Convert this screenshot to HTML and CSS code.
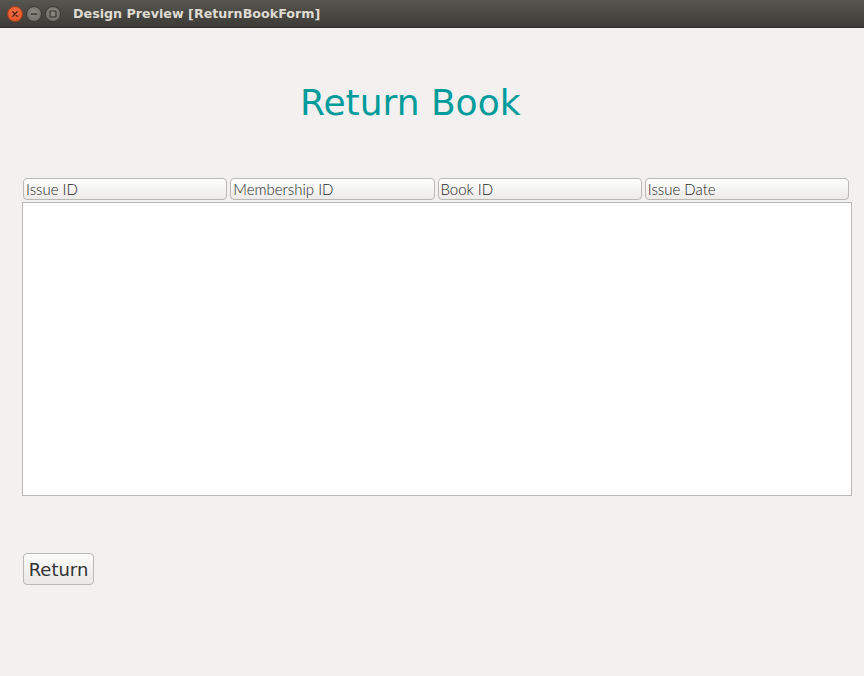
FILE: index.html
```html
<!DOCTYPE html>
<html>
<head>
<meta charset="utf-8">
<title>Design Preview [ReturnBookForm]</title>
<link rel="stylesheet" href="styles.css">
</head>
<body>
<div class="window">
  <div class="titlebar">
    <div class="controls">
      <span class="ctl close"><svg width="8" height="8" viewBox="0 0 8 8"><path d="M1.8 1.8 L6.2 6.2 M6.2 1.8 L1.8 6.2" stroke="#4a1e0e" stroke-width="1.3" stroke-linecap="round"/></svg></span>
      <span class="ctl min"><svg width="8" height="8" viewBox="0 0 8 8"><path d="M1 4 H7" stroke="#35342f" stroke-width="1.4"/></svg></span>
      <span class="ctl max"><svg width="8" height="8" viewBox="0 0 8 8"><rect x="1" y="1" width="6" height="6" rx="1" fill="none" stroke="#35342f" stroke-width="1.2"/></svg></span>
    </div>
    <div class="title">Design Preview [ReturnBookForm]</div>
  </div>
  <div class="content">
    <h1 class="heading">Return Book</h1>
    <div class="table">
      <div class="thead">
        <div class="th">Issue ID</div>
        <div class="th">Membership ID</div>
        <div class="th">Book ID</div>
        <div class="th">Issue Date</div>
      </div>
      <div class="tbody"></div>
    </div>
    <button class="btn">Return</button>
  </div>
</div>
</body>
</html>
```
FILE: styles.css
```css
html, body {
  margin: 0;
  padding: 0;
  background: #f2f1f0;
}
.window {
  width: 864px;
  height: 676px;
  display: flex;
  flex-direction: column;
  background: #f2f1f0;
}
.titlebar {
  height: 28px;
  flex: none;
  display: flex;
  align-items: center;
  background: linear-gradient(#57554f, #3c3b37);
  border-bottom: 1px solid #2f2e2a;
  box-sizing: border-box;
}
.controls {
  display: flex;
  gap: 3px;
  padding-left: 7px;
}
.ctl {
  width: 16px;
  height: 16px;
  border-radius: 50%;
  display: flex;
  align-items: center;
  justify-content: center;
  box-sizing: border-box;
}
.close {
  background: radial-gradient(circle at 50% 40%, #f47448, #de4c1f);
  border: 1px solid #a8401a;
}
.min, .max {
  background: radial-gradient(circle at 50% 40%, #8c8a83, #6b6963);
  border: 1px solid #3a3934;
}
.title {
  margin-left: 12px;
  font-family: "DejaVu Sans", sans-serif;
  font-weight: bold;
  font-size: 12.7px;
  color: #dfdbd2;
}
.content {
  flex: 1;
  display: flex;
  flex-direction: column;
  padding: 0 12px 0 22px;
}
.heading {
  margin: 53px 0 0 278px;
  align-self: flex-start;
  font-family: "DejaVu Sans", sans-serif;
  font-weight: normal;
  font-size: 36px;
  line-height: 44px;
  color: #009b9b;
}
.table {
  margin-top: 53px;
  width: 830px;
}
.thead {
  display: flex;
  gap: 3px;
  padding: 0 3px 0 1px;
}
.th {
  flex: 1;
  height: 22px;
  box-sizing: border-box;
  border: 1px solid #b9b8b4;
  border-radius: 4px;
  background: linear-gradient(#ffffff, #ebeae8);
  font-family: "Lato", sans-serif;
  font-weight: 300;
  font-size: 15px;
  line-height: 21px;
  color: #262626;
  padding-left: 2px;
  white-space: nowrap;
  overflow: hidden;
}
.tbody {
  margin-top: 2px;
  height: 294px;
  box-sizing: border-box;
  border: 1px solid #b8b8b8;
  background: #ffffff;
}
.btn {
  margin-top: 57px;
  margin-left: 1px;
  align-self: flex-start;
  width: 71px;
  height: 32px;
  box-sizing: border-box;
  border: 1px solid #b9b8b4;
  border-radius: 4px;
  background: linear-gradient(#fbfbfa, #e9e8e6);
  font-family: "DejaVu Sans", sans-serif;
  font-size: 18px;
  color: #333333;
  padding: 0;
}
```
